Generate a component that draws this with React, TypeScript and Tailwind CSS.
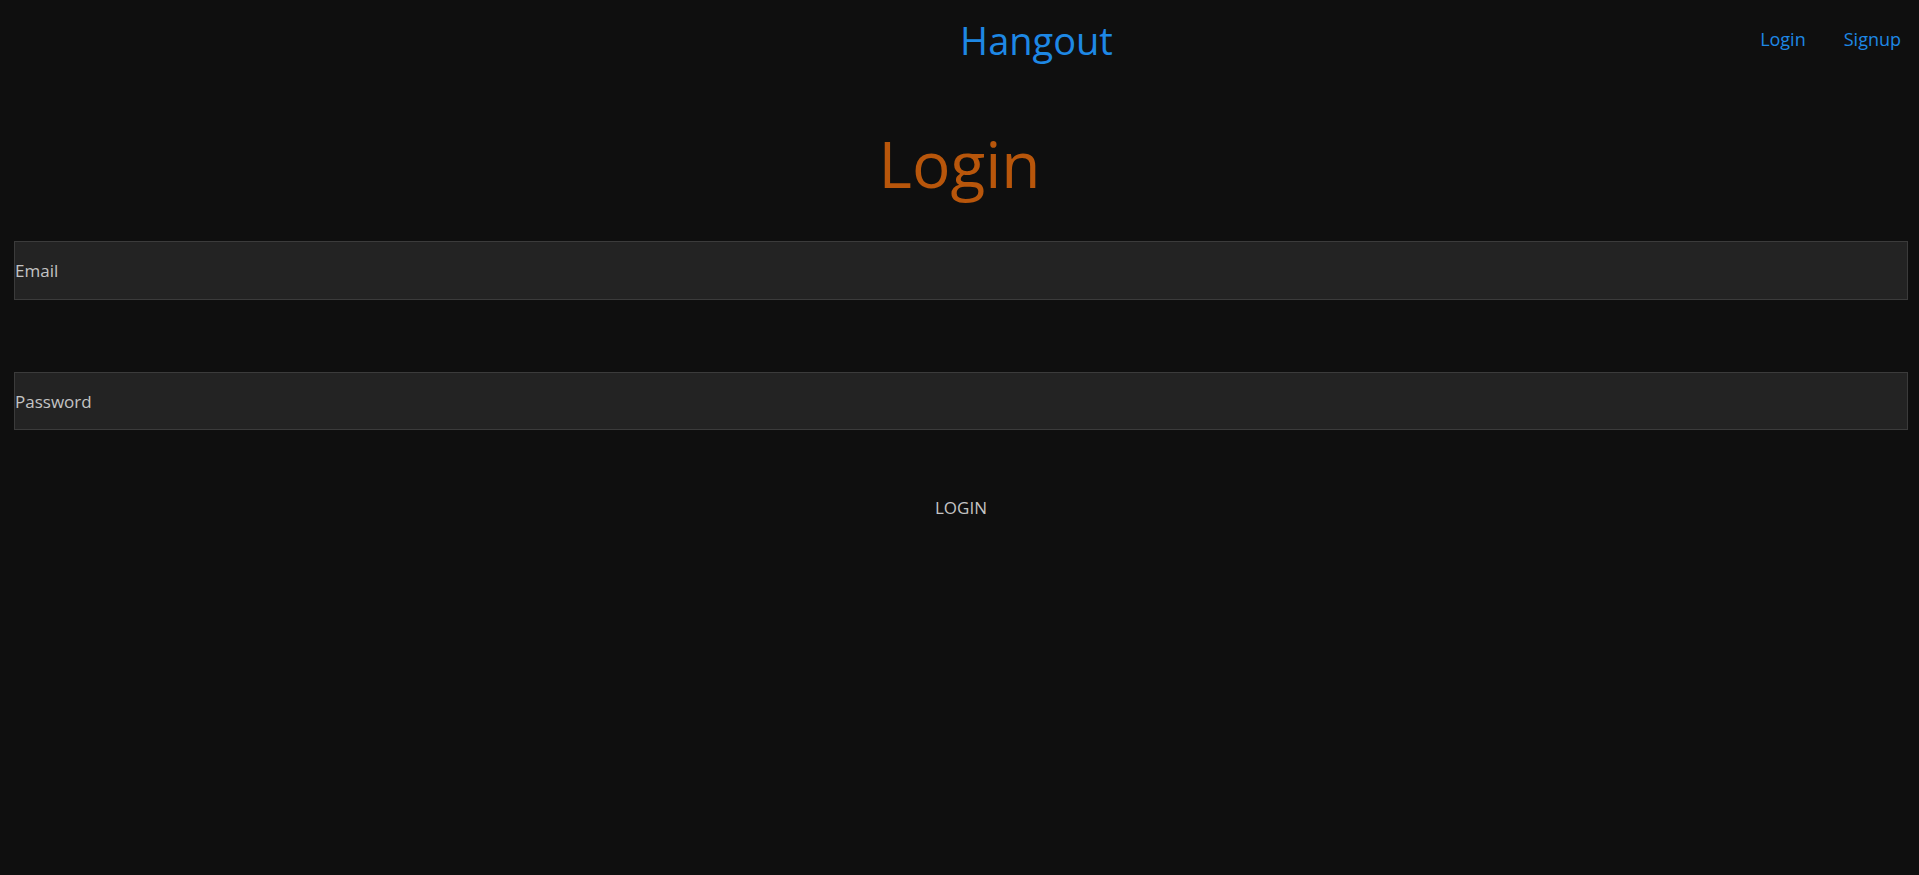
export default function App() {
  return (
    <div className="min-h-screen bg-[#0f0f0f] font-['Open_Sans',sans-serif]">
      {/* Header */}
      <header className="flex items-start h-[76px] pt-[21px]">
        <div className="flex-1" />
        <a className="ml-[172px] text-[38px] leading-none text-[#1e88e5]" href="#">
          Hangout
        </a>
        <nav className="flex-1 flex justify-end gap-[38px] pr-[18px] mt-[9px] text-[18px] leading-none text-[#1e88e5]">
          <a href="#">Login</a>
          <a href="#">Signup</a>
        </nav>
      </header>

      <main>
        <h1 className="mt-[56px] text-center text-[64px] leading-none text-[#b8560b]">Login</h1>

        <form className="mt-[45px] ml-[14px] mr-[11px]" onSubmit={(e) => e.preventDefault()}>
          <input
            type="email"
            placeholder="Email"
            className="block w-full h-[59px] p-0 bg-[#232323] border border-[#3b3b3b] text-[17px] text-[#c4c4c4] placeholder:text-[#c4c4c4] outline-none"
          />
          <input
            type="password"
            placeholder="Password"
            className="block w-full h-[58px] mt-[72px] p-0 bg-[#232323] border border-[#3b3b3b] text-[17px] text-[#c4c4c4] placeholder:text-[#c4c4c4] outline-none"
          />
          <div className="flex justify-center mt-[69px]">
            <button type="submit" className="text-[17px] leading-none text-[#c4c4c4] uppercase">
              Login
            </button>
          </div>
        </form>
      </main>
    </div>
  );
}
